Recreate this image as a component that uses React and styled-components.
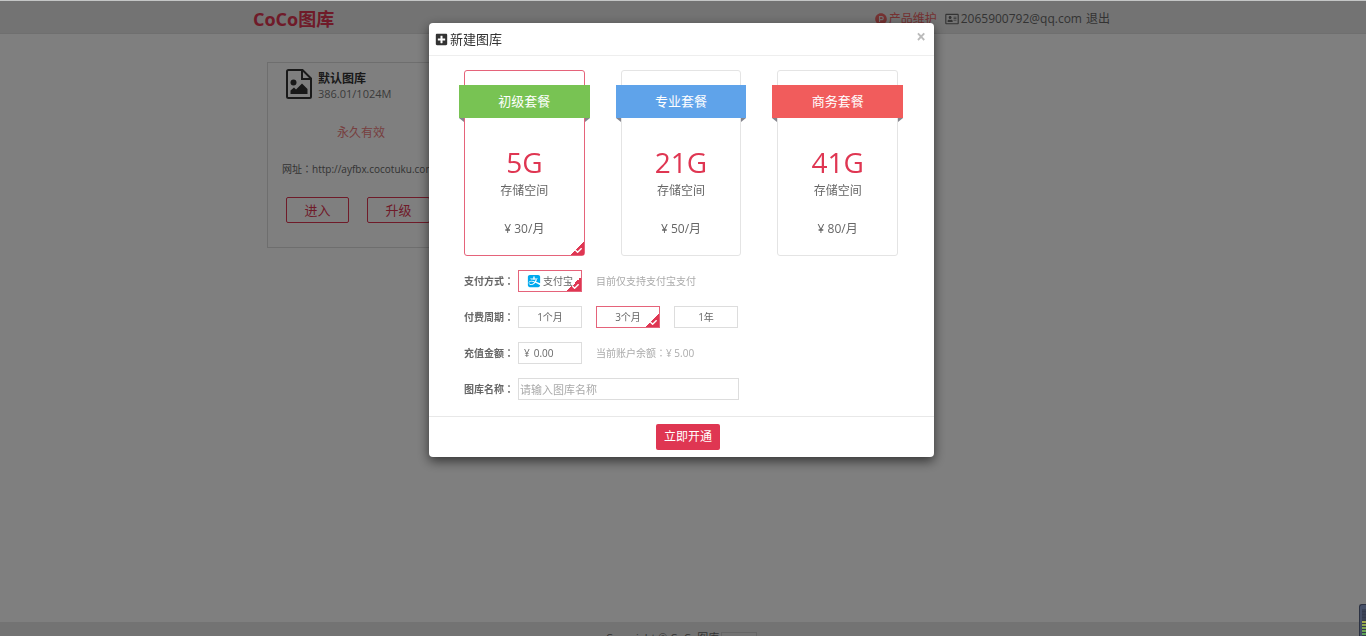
import React, { useState } from 'react'
import styled, { createGlobalStyle } from 'styled-components'
import {
  FaAlipay,
  FaCheck,
  FaPlusSquare,
  FaProductHunt,
  FaRegAddressCard,
} from 'react-icons/fa'

const plans = [
  { id: 'basic', name: '初级套餐', size: '5G', price: 30, color: '#78c353' },
  { id: 'pro', name: '专业套餐', size: '21G', price: 50, color: '#5fa3ea' },
  { id: 'business', name: '商务套餐', size: '41G', price: 80, color: '#f15c5c' },
]

const periods = ['1个月', '3个月', '1年']

const Checked = () => (
  <Corner>
    <FaCheck />
  </Corner>
)

const ImageFile = () => (
  <svg viewBox="0 0 26 30" fill="none" stroke="currentColor" strokeWidth="2">
    <path d="M1 2.5Q1 1 2.5 1H16.5L25 9.5V27.5Q25 29 23.5 29H2.5Q1 29 1 27.5Z" />
    <path d="M16 1.5V10H24.5" />
    <circle cx="7.5" cy="13.5" r="3" fill="currentColor" stroke="none" />
    <path
      d="M4.5 25V21.5L8 18.5L10 20.5L16 14.5L21.5 20V25Z"
      fill="currentColor"
      stroke="none"
    />
  </svg>
)

const Gallery = () => (
  <Card>
    <CardHead>
      <ImageFile />
      <CardInfo>
        <CardName>默认图库</CardName>
        <Usage>386.01/1024M</Usage>
      </CardInfo>
    </CardHead>
    <Validity>永久有效</Validity>
    <Address>
      网址<Colon>：</Colon>http://ayfbx.cocotuku.com
    </Address>
    <CardActions>
      <OutlineButton type="button">进入</OutlineButton>
      <OutlineButton type="button">升级</OutlineButton>
    </CardActions>
  </Card>
)

const Plan = ({ plan, selected, onSelect }) => (
  <PlanBox $selected={selected}>
    <HiddenRadio name="plan" checked={selected} onChange={onSelect} />
    <Ribbon $color={plan.color}>{plan.name}</Ribbon>
    <PlanSize>{plan.size}</PlanSize>
    <PlanText>存储空间</PlanText>
    <PlanPrice>¥ {plan.price}/月</PlanPrice>
    {selected && <Checked />}
  </PlanBox>
)

const App = () => {
  const [plan, setPlan] = useState('basic')
  const [period, setPeriod] = useState('3个月')
  const [amount, setAmount] = useState('0.00')
  const [name, setName] = useState('')

  return (
    <>
      <GlobalStyle />
      <Page>
        <Header>
          <Container>
            <Logo>CoCo图库</Logo>
            <Nav>
              <NavLink href="#product" $accent>
                <FaProductHunt />
                产品维护
              </NavLink>
              <NavLink href="#account">
                <FaRegAddressCard />
                2065900792@qq.com
              </NavLink>
              <NavLink href="#logout">退出</NavLink>
            </Nav>
          </Container>
        </Header>
        <Main>
          <Gallery />
        </Main>
        <Footer>
          Copyright © CoCo图库
          <FooterBadge />
        </Footer>
      </Page>

      <Overlay>
        <Modal role="dialog" aria-labelledby="modal-title">
          <ModalHeader>
            <FaPlusSquare />
            <ModalTitle id="modal-title">新建图库</ModalTitle>
            <Close type="button" aria-label="关闭">×</Close>
          </ModalHeader>
          <ModalBody>
            <Plans>
              {plans.map(item => (
                <Plan
                  key={item.id}
                  plan={item}
                  selected={item.id === plan}
                  onSelect={() => setPlan(item.id)}
                />
              ))}
            </Plans>
            <Row>
              <Label>支付方式<Colon>：</Colon></Label>
              <Option $selected>
                <HiddenRadio name="payment" defaultChecked />
                <AlipayIcon />
                支付宝
                <Checked />
              </Option>
              <Note>目前仅支持支付宝支付</Note>
            </Row>
            <Row>
              <Label>付费周期<Colon>：</Colon></Label>
              {periods.map(item => (
                <Option key={item} $selected={item === period}>
                  <HiddenRadio
                    name="period"
                    checked={item === period}
                    onChange={() => setPeriod(item)}
                  />
                  {item}
                  {item === period && <Checked />}
                </Option>
              ))}
            </Row>
            <Row>
              <Label as="label" htmlFor="amount">充值金额<Colon>：</Colon></Label>
              <Amount>
                ¥
                <AmountInput
                  id="amount"
                  value={amount}
                  onChange={e => setAmount(e.target.value)}
                />
              </Amount>
              <Note>当前账户余额<Colon>：</Colon>¥ 5.00</Note>
            </Row>
            <Row>
              <Label as="label" htmlFor="name">图库名称<Colon>：</Colon></Label>
              <NameInput
                id="name"
                placeholder="请输入图库名称"
                value={name}
                onChange={e => setName(e.target.value)}
              />
            </Row>
          </ModalBody>
          <ModalFooter>
            <Submit type="button">立即开通</Submit>
          </ModalFooter>
        </Modal>
      </Overlay>
      <TopLine />
      <Meter>
        <MeterBars />
      </Meter>
    </>
  )
}

const GlobalStyle = createGlobalStyle`
  * {
    box-sizing: border-box;
  }

  body {
    margin: 0;
    overflow: hidden;
    background: #fff;
    color: #666;
    font-family: 'Open Sans', 'Noto Sans CJK SC', sans-serif;
    font-size: 12px;
    line-height: 16px;
  }

  button,
  input {
    font: inherit;
    color: inherit;
  }

  button {
    cursor: pointer;
  }
`

// the TC face centres the full-width colon in its box
const Colon = styled.span`
  font-family: 'Noto Sans CJK TC', sans-serif;
  line-height: 1;
`

const Page = styled.div`
  display: flex;
  flex-direction: column;
  height: 100vh;
  padding-top: 1px;
`

const Header = styled.header`
  height: 33px;
  padding: 3px 3px 0 0;
  background: #e7e7e7;
  border-bottom: 1px solid #dedede;
`

const Container = styled.div`
  display: flex;
  align-items: center;
  justify-content: space-between;
  max-width: 857px;
  height: 100%;
  margin: 0 auto;
`

const Logo = styled.h1`
  margin: 0;
  color: #df3652;
  font-size: 18px;
  line-height: 24px;
`

const Nav = styled.nav`
  display: flex;
  align-items: center;
  gap: 4px;
`

const NavLink = styled.a`
  display: flex;
  align-items: center;
  gap: 2px;
  margin-right: ${props => (props.$accent ? '4px' : '0')};
  color: ${props => (props.$accent ? '#ea6464' : '#666')};
  text-decoration: none;

  svg {
    width: ${props => (props.$accent ? '12px' : '14px')};
    height: 12px;
  }
`

const Main = styled.main`
  flex: 1;
  width: 100%;
  max-width: 860px;
  margin: 0 auto;
  padding: 28px 14px;
`

const Card = styled.section`
  width: 188px;
  padding: 6px 14px 24px;
  border: 1px solid #ddd;
`

const CardHead = styled.div`
  display: flex;
  align-items: flex-start;
  gap: 6px;
  padding-left: 4px;
  color: #333;

  svg {
    width: 26px;
    height: 30px;
  }
`

const CardInfo = styled.div`
  padding-top: 2px;
`

const CardName = styled.h2`
  margin: 0;
  font-size: 12px;
  line-height: 16px;
`

const Usage = styled.div`
  color: #777;
  font-size: 11px;
  line-height: 14px;
`

const Validity = styled.p`
  margin: 24px 0 20px;
  color: #ee8080;
  text-align: center;
`

const Address = styled.p`
  margin: 0 0 20px;
  font-size: 10px;
  white-space: nowrap;
`

const CardActions = styled.div`
  display: flex;
  gap: 18px;
  padding-left: 4px;
`

const OutlineButton = styled.button`
  flex: none;
  width: 63px;
  height: 26px;
  padding: 0;
  border: 1px solid #df3652;
  border-radius: 2px;
  background: none;
  color: #df3652;
  font-size: 13px;
`

const Footer = styled.footer`
  display: flex;
  justify-content: center;
  gap: 2px;
  height: 14px;
  padding: 8px 3px 0 0;
  overflow: hidden;
  background: #e7e7e7;
  font-size: 11px;
`

const FooterBadge = styled.span`
  width: 36px;
  height: 16px;
  margin-top: 2px;
  border: 1px solid #ccc;
`

const Overlay = styled.div`
  position: fixed;
  inset: 0;
  padding: 23px 3px 0 0;
  background: rgba(0, 0, 0, 0.5);
`

const Modal = styled.div`
  width: 505px;
  max-width: 100%;
  margin: 0 auto;
  border-radius: 4px;
  background: #fff;
  box-shadow: 0 4px 12px rgba(0, 0, 0, 0.6);
`

const ModalHeader = styled.div`
  display: flex;
  align-items: center;
  gap: 2px;
  height: 33px;
  padding: 0 8px 0 6px;
  border-bottom: 1px solid #eee;
  color: #333;
  font-size: 13px;
`

const ModalTitle = styled.h3`
  flex: 1;
  margin: 0;
  font-size: 13px;
  font-weight: normal;
`

const Close = styled.button`
  height: 20px;
  padding: 0 0 4px;
  border: 0;
  background: none;
  color: #bbb;
  font-size: 17px;
  font-weight: bold;
  line-height: 16px;
`

const ModalBody = styled.div`
  display: flex;
  flex-direction: column;
  gap: 14px;
  padding: 14px 35px 16px;
`

const Plans = styled.div`
  display: grid;
  grid-template-columns: repeat(3, 1fr);
  gap: 36px;
  padding-right: 1px;
`

const PlanBox = styled.label`
  position: relative;
  height: 186px;
  padding-top: 14px;
  border: 1px solid ${props => (props.$selected ? '#e5637a' : '#e4e4e4')};
  border-radius: 3px;
  cursor: pointer;
  text-align: center;
`

const HiddenRadio = styled.input.attrs({ type: 'radio' })`
  position: absolute;
  inset: 0;
  margin: 0;
  opacity: 0;
  cursor: pointer;
`

const Ribbon = styled.div`
  position: relative;
  height: 33px;
  margin: 0 -6px;
  background: ${props => props.$color};
  color: #fff;
  font-size: 13px;
  line-height: 33px;

  &::before,
  &::after {
    content: '';
    position: absolute;
    top: 100%;
    border-top: 4px solid #84848c;
  }

  &::before {
    left: 0;
    border-left: 5px solid transparent;
  }

  &::after {
    right: 0;
    border-right: 5px solid transparent;
  }
`

const PlanSize = styled.div`
  margin-top: 25px;
  color: #df3652;
  font-size: 28px;
  line-height: 38px;
`

const PlanText = styled.div`
  margin-top: 2px;
`

const PlanPrice = styled.div`
  margin-top: 22px;
`

const Corner = styled.span`
  position: absolute;
  right: 0;
  bottom: 0;
  display: flex;
  align-items: flex-end;
  justify-content: flex-end;
  width: 14px;
  height: 14px;
  padding: 1px 2px;
  background: linear-gradient(135deg, transparent 50%, #df3652 50%);
  color: #fff;

  svg {
    width: 7px;
    height: 7px;
  }
`

const Row = styled.div`
  display: flex;
  align-items: center;
  gap: 14px;
  height: 22px;
`

const Label = styled.span`
  width: 54px;
  margin-right: -14px;
  font-size: 10px;
  font-weight: bold;
  white-space: nowrap;
`

const Option = styled.label`
  position: relative;
  display: flex;
  align-items: center;
  justify-content: center;
  gap: 2px;
  width: 64px;
  height: 22px;
  border: 1px solid ${props => (props.$selected ? '#e5637a' : '#ddd')};
  cursor: pointer;
  font-size: 10px;
`

const AlipayIcon = styled(FaAlipay)`
  width: 14px;
  height: 14px;
  color: #00a9ee;
`

const Note = styled.span`
  color: #aaa;
  font-size: 10px;
`

const Amount = styled.div`
  display: flex;
  align-items: center;
  gap: 4px;
  width: 64px;
  height: 22px;
  padding-left: 5px;
  border: 1px solid #ddd;
  font-size: 10px;
`

const AmountInput = styled.input`
  width: 100%;
  min-width: 0;
  padding: 0;
  border: 0;
  outline: 0;
`

const NameInput = styled.input`
  width: 221px;
  height: 22px;
  padding: 0 1px;
  border: 1px solid #ddd;
  outline: 0;
  font-size: 11px;

  &::placeholder {
    color: #aaa;
    opacity: 1;
  }
`

const ModalFooter = styled.div`
  display: flex;
  justify-content: center;
  padding: 7px 0 7px 13px;
  border-top: 1px solid #e8e8e8;
`

const Submit = styled.button`
  width: 64px;
  height: 26px;
  padding: 0;
  border: 0;
  border-radius: 2px;
  background: #df3652;
  color: #fff;
`

const TopLine = styled.div`
  position: fixed;
  inset: 0 0 auto;
  height: 1px;
  background: #c4c6c6;
`

// level meter docked at the right edge of the window
const Meter = styled.div`
  position: fixed;
  right: 0;
  bottom: 0;
  width: 7px;
  height: 32px;
  padding: 4px 0 0 2px;
  border: 1px solid #2c3242;
  border-width: 1px 0 0 1px;
  border-radius: 3px 0 0 0;
  background: #465068;
`

const MeterBars = styled.div`
  width: 4px;
  height: 100%;
  background:
    repeating-linear-gradient(transparent 0 2px, #353c4e 2px 3px),
    linear-gradient(#3a4256 12px, #a9ad4c 12px, #4fa05a);
`

export default App
